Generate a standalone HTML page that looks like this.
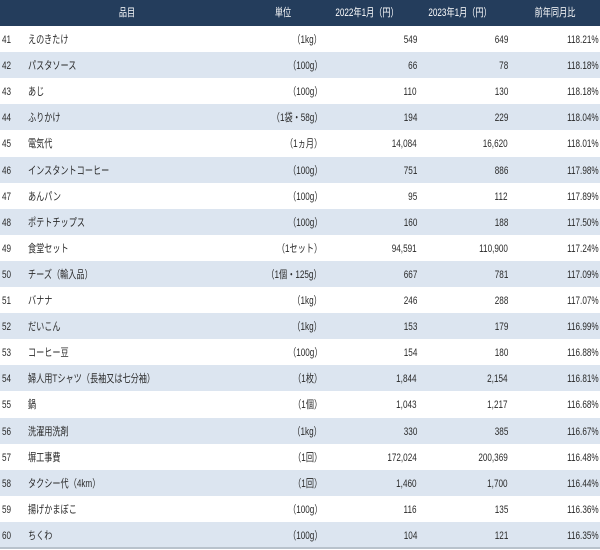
<!DOCTYPE html>
<html><head><meta charset="utf-8"><style>
html,body{margin:0;padding:0;background:#fff;}
body{width:600px;height:550px;overflow:hidden;font-family:"Liberation Sans","Noto Sans CJK JP",sans-serif;font-size:11px;color:#2a2a2a;}
.hd{position:absolute;left:0;top:0;width:600px;height:26px;background:#243d5c;color:#fff;}
.r{position:absolute;left:0;width:600px;height:26px;}
.r.a{background:#dce5f0;}
.c{position:absolute;top:1px;line-height:26px;white-space:nowrap;transform:scaleX(0.74);}
.l{transform-origin:left center;}
.rt{transform-origin:right center;text-align:right;}
.ct{transform-origin:center center;text-align:center;}
.bot{position:absolute;left:0;top:547px;width:600px;height:2px;background:#b8c2cc;}
</style></head><body>
<div class="hd">
<span class="c ct" style="left:77px;width:100px;top:0">品目</span>
<span class="c ct" style="left:253px;width:60px;top:0">単位</span>
<span class="c ct" style="left:317px;width:100px;top:0">2022年1月（円）</span>
<span class="c ct" style="left:410px;width:100px;top:0">2023年1月（円）</span>
<span class="c ct" style="left:505px;width:100px;top:0">前年同月比</span>
</div>
<div id="rows"></div>
<script>
var d=[
[41,"えのきたけ","（1kg）","549","649","118.21%"],
[42,"パスタソース","（100g）","66","78","118.18%"],
[43,"あじ","（100g）","110","130","118.18%"],
[44,"ふりかけ","（1袋・58g）","194","229","118.04%"],
[45,"電気代","（1ヵ月）","14,084","16,620","118.01%"],
[46,"インスタントコーヒー","（100g）","751","886","117.98%"],
[47,"あんパン","（100g）","95","112","117.89%"],
[48,"ポテトチップス","（100g）","160","188","117.50%"],
[49,"食堂セット","（1セット）","94,591","110,900","117.24%"],
[50,"チーズ（輸入品）","（1個・125g）","667","781","117.09%"],
[51,"バナナ","（1kg）","246","288","117.07%"],
[52,"だいこん","（1kg）","153","179","116.99%"],
[53,"コーヒー豆","（100g）","154","180","116.88%"],
[54,"婦人用Tシャツ（長袖又は七分袖）","（1枚）","1,844","2,154","116.81%"],
[55,"鍋","（1個）","1,043","1,217","116.68%"],
[56,"洗濯用洗剤","（1kg）","330","385","116.67%"],
[57,"塀工事費","（1回）","172,024","200,369","116.48%"],
[58,"タクシー代（4km）","（1回）","1,460","1,700","116.44%"],
[59,"揚げかまぼこ","（100g）","116","135","116.36%"],
[60,"ちくわ","（100g）","104","121","116.35%"]];
var h="";
d.forEach(function(r,i){
var t=26+i*26.1;
h+='<div class="r'+(i%2?' a':'')+'" style="top:'+t+'px">'+
'<span class="c l" style="left:2px">'+r[0]+'</span>'+
'<span class="c l" style="left:28px">'+r[1]+'</span>'+
'<span class="c rt" style="right:278px">'+r[2]+'</span>'+
'<span class="c rt" style="right:183px">'+r[3]+'</span>'+
'<span class="c rt" style="right:92px">'+r[4]+'</span>'+
'<span class="c rt" style="right:1px">'+r[5]+'</span></div>';
});
document.getElementById("rows").innerHTML=h;
</script>
<div class="bot"></div>
</body></html>
